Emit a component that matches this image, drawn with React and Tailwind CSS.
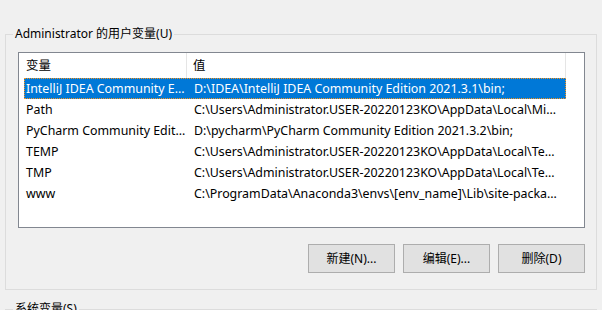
import React from 'react';

const FONT = { fontFamily: '"Noto Sans", "Noto Sans CJK SC", sans-serif' };

const VARS = [
  { name: 'IntelliJ IDEA Community Edition', value: 'D:\\IDEA\\IntelliJ IDEA Community Edition 2021.3.1\\bin;' },
  { name: 'Path', value: 'C:\\Users\\Administrator.USER-20220123KO\\AppData\\Local\\Microsoft\\WindowsApps;' },
  { name: 'PyCharm Community Edition', value: 'D:\\pycharm\\PyCharm Community Edition 2021.3.2\\bin;' },
  { name: 'TEMP', value: 'C:\\Users\\Administrator.USER-20220123KO\\AppData\\Local\\Temp' },
  { name: 'TMP', value: 'C:\\Users\\Administrator.USER-20220123KO\\AppData\\Local\\Temp' },
  { name: 'www', value: 'C:\\ProgramData\\Anaconda3\\envs\\[env_name]\\Lib\\site-packages' },
];

function Button({ children }) {
  return (
    <button className="w-[87px] h-[29px] bg-[#e1e1e1] border border-[#adadad] text-[12px] text-black">
      {children}
    </button>
  );
}

export default function App() {
  const selected = 0;
  return (
    <div className="w-[602px] h-[310px] bg-[#f0f0f0] overflow-hidden text-black" style={FONT}>
      <div className="pt-[26px] pl-[5px]">
        {/* user variables group */}
        <fieldset className="w-[592px] h-[264px] border border-[#dcdcdc]">
          <legend className="ml-[7px] px-[2px] text-[12px] leading-[16px]">Administrator 的用户变量(U)</legend>

          <div className="ml-[12px] mt-[10px] w-[567px] h-[176px] border border-[#828790] bg-white pl-[5px]">
            {/* header */}
            <div className="flex h-[25px] text-[12.4px]">
              <div className="w-[163px] pl-[2px] pt-[4px] border-r border-[#e5e5e5]">变量</div>
              <div className="w-[379px] pl-[6px] pt-[4px] border-r border-[#e5e5e5]">值</div>
            </div>
            {/* rows */}
            {VARS.map((v, i) => (
              <div
                key={i}
                className={`flex w-[542px] h-[21px] items-center pt-[2px] text-[12.4px] ${
                  i === selected ? 'bg-[#0078d7] text-white outline outline-1 outline-dotted outline-[#f7941d] -outline-offset-1' : ''
                }`}
              >
                <div className="w-[163px] pl-[2px] truncate">{v.name}</div>
                <div className="w-[379px] pl-[7px] pr-[5px] truncate">{v.value}</div>
              </div>
            ))}
          </div>

          <div className="ml-[12px] flex justify-end gap-[8px] mt-[16px] w-[567px]">
            <Button>新建(N)...</Button>
            <Button>编辑(E)...</Button>
            <Button>删除(D)</Button>
          </div>
        </fieldset>

        {/* system variables group */}
        <fieldset className="mt-[11px] w-[592px] h-[100px] border border-[#dcdcdc]">
          <legend className="ml-[7px] px-[2px] text-[12px] leading-[16px]">系统变量(S)</legend>
        </fieldset>
      </div>
    </div>
  );
}
